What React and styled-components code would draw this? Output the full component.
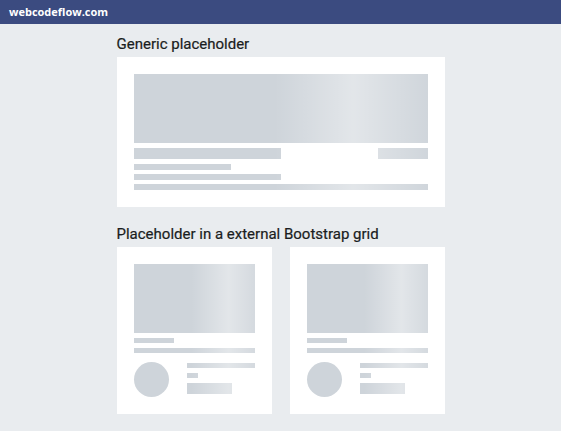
import styled, { createGlobalStyle } from "styled-components";

const GlobalStyle = createGlobalStyle`
  body {
    margin: 0;
    background: #e9ecef;
    font-family: Roboto, "Open Sans", sans-serif;
    color: #212529;
  }
`;

export default function App() {
  return (
    <>
      <GlobalStyle />
      <TopBar>webcodeflow.com</TopBar>
      <Main>
        <Title>Generic placeholder</Title>
        <Card>
          <Picture $h={69} />
          <Row>
            <Bar $w="50%" $h={11} />
            <Bar $w="16.7%" $h={11} />
          </Row>
          <Lines>
            <Bar $w="33.3%" $h={6} />
            <Bar $w="50%" $h={6} />
            <Bar $w="100%" $h={6} />
          </Lines>
        </Card>

        <Title $top={17}>Placeholder in a external Bootstrap grid</Title>
        <Grid>
          <GridCard />
          <GridCard />
        </Grid>
      </Main>
    </>
  );
}

function GridCard() {
  return (
    <Card>
      <Picture $h={69} />
      <Lines $gap={5}>
        <Bar $w="33.3%" $h={5} />
        <Bar $w="100%" $h={5} />
      </Lines>
      <Media>
        <Avatar />
        <MediaLines>
          <Bar $w="100%" $h={5} />
          <Bar $w="16.7%" $h={5} />
          <Bar $w="67%" $h={11} />
        </MediaLines>
      </Media>
    </Card>
  );
}

const TopBar = styled.div`
  height: 24px;
  background: #3b4b80;
  color: #fff;
  font-family: "Open Sans", "Noto Sans", sans-serif;
  font-weight: 700;
  font-size: 11px;
  line-height: 24px;
  padding-left: 9px;
`;

const Main = styled.div`
  width: 328px;
  margin: 0 auto;
  padding-top: 10px;
`;

const Title = styled.h2`
  margin: ${(p) => p.$top || 0}px 0 3px;
  font-size: 15px;
  font-weight: 400;
  line-height: 20px;
  color: #1a1d21;
  -webkit-text-stroke: 0.2px #1a1d21;
`;

const Card = styled.div`
  position: relative;
  overflow: hidden;
  background: #fff;
  padding: 17px;
  display: flex;
  flex-direction: column;
  gap: 5px;

  &::before {
    content: "";
    position: absolute;
    inset: 0;
    pointer-events: none;
    background: linear-gradient(
      to right,
      rgba(255, 255, 255, 0) 48%,
      rgba(255, 255, 255, 0.42) 72%,
      rgba(255, 255, 255, 0) 97%
    );
  }
`;

const Picture = styled.div`
  height: ${(p) => p.$h}px;
  background: #ced4da;
`;

const Row = styled.div`
  display: flex;
  justify-content: space-between;
`;

const Lines = styled.div`
  display: flex;
  flex-direction: column;
  gap: ${(p) => p.$gap || 4}px;
`;

const Bar = styled.div`
  width: ${(p) => p.$w};
  height: ${(p) => p.$h}px;
  background: #ced4da;
`;

const Grid = styled.div`
  display: grid;
  grid-template-columns: 1fr 1fr;
  gap: 18px;
`;

const Media = styled.div`
  display: flex;
  align-items: flex-start;
  gap: 18px;
  margin-top: 4px;
`;

const Avatar = styled.div`
  flex: none;
  width: 35px;
  height: 35px;
  border-radius: 50%;
  background: #ced4da;
`;

const MediaLines = styled.div`
  flex: 1;
  display: flex;
  flex-direction: column;
  gap: 5px;
  padding-top: 1px;
`;
